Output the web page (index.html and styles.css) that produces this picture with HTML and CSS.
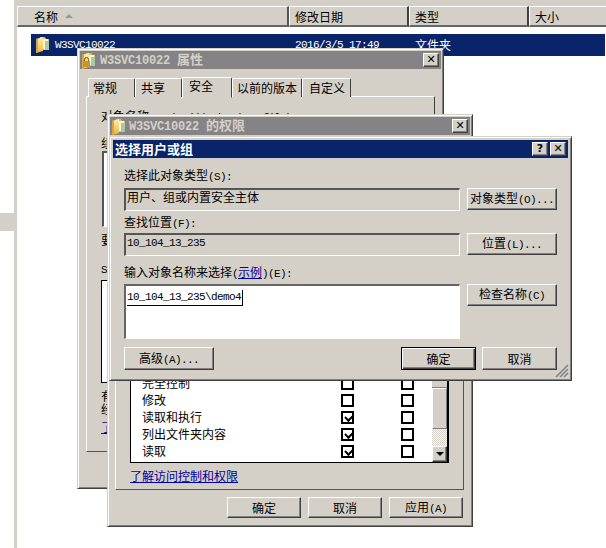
FILE: index.html
```html
<!DOCTYPE html>
<html lang="zh">
<head>
<meta charset="utf-8">
<title>选择用户或组</title>
<link rel="stylesheet" href="styles.css">
</head>
<body>
<svg class="defs" width="0" height="0" aria-hidden="true">
  <defs>
    <linearGradient id="fg" x1="0" y1="0" x2="0" y2="1">
      <stop offset="0" stop-color="#fdf0a8"/><stop offset="1" stop-color="#e8b648"/>
    </linearGradient>
    <symbol id="folder" viewBox="0 0 14 17">
      <path d="M4 1h5l1 2h3v11H4z" fill="#e7bf52"/>
      <path d="M6 3h6v10H6z" fill="#fff6d0"/>
      <path d="M9 5h4v9H9z" fill="#a9c9a6"/>
      <path d="M0 3l7-2v14l-7 2z" fill="url(#fg)"/>
      <path d="M0 3l2-.6v14L0 17z" fill="#d9a63c"/>
    </symbol>
  </defs>
</svg>
<div class="desktop">
  <div class="side"><div class="side-block"></div></div>
  <div class="gutter"></div>
  <main class="explorer">
    <div class="top-strip"></div>
    <div class="headers">
      <div class="hcell name">名称<span class="sort"></span></div>
      <div class="hcell date">修改日期</div>
      <div class="hcell type">类型</div>
      <div class="hcell size">大小</div>
    </div>
    <div class="row">
      <svg class="row-icon" width="14" height="17"><use href="#folder"/></svg>
      <span class="row-name l">W3SVC10022</span>
      <span class="row-date l">2016/3/5 17:49</span>
      <span class="row-type">文件夹</span>
    </div>
  </main>

  <section class="win win-props">
    <header class="title">
      <svg class="title-icon" width="14" height="17"><use href="#folder"/><path d="M1 9h7v6H1z" fill="#c8962c"/><path d="M2.5 9V7.5a2 2 0 0 1 4 0V9" fill="none" stroke="#6b5a2a"/></svg>
      <span class="title-text"><span class="lb">W3SVC10022</span>属性</span>
      <span class="cap-btn">✕</span>
    </header>
    <div class="tabs">
      <span class="tab t1">常规</span><span class="tab t2">共享</span><span class="tab active t3">安全</span><span class="tab t4">以前的版本</span><span class="tab t5">自定义</span>
    </div>
    <div class="props-panel">
      <div class="p-objname">对象名称:&nbsp;&nbsp;&nbsp;<span class="l">D:\web\htdocs\wwwfile\W3SVC10022</span></div>
      <div class="p-group">组或用户名(G):</div>
      <div class="p-list1"></div>
      <div class="p-change">要更改权限,请单击"编辑"。</div>
      <div class="p-perm l">SYSTEM 的权限(P)</div>
      <div class="p-list2"></div>
      <div class="p-note">有关特殊权限或高级设置,请单击<br>经"高级"。</div>
      <a class="link p-link" href="#">了解访问控制和权限</a>
    </div>
  </section>

  <section class="win win-perm">
    <header class="title">
      <svg class="title-icon" width="14" height="17"><use href="#folder"/></svg>
      <span class="title-text"><span class="lb">W3SVC10022</span>的权限</span>
      <span class="cap-btn">✕</span>
    </header>
    <div class="perm-panel">
      <div class="perm-list">
        <div class="perm-rows">
          <div class="perm-row"><span>完全控制</span><i class="cb"></i><i class="cb"></i></div>
          <div class="perm-row"><span>修改</span><i class="cb"></i><i class="cb"></i></div>
          <div class="perm-row"><span>读取和执行</span><i class="cb on"></i><i class="cb"></i></div>
          <div class="perm-row"><span>列出文件夹内容</span><i class="cb on"></i><i class="cb"></i></div>
          <div class="perm-row"><span>读取</span><i class="cb on"></i><i class="cb"></i></div>
        </div>
        <div class="scroll">
          <div class="up"></div>
          <div class="thumb"></div>
          <div class="track"></div>
          <div class="arrow"><span></span></div>
        </div>
      </div>
      <a class="link perm-link" href="#">了解访问控制和权限</a>
    </div>
    <footer class="perm-foot">
      <button class="btn b74">确定</button>
      <button class="btn b74">取消</button>
      <button class="btn b74">应用<span class="l">(A)</span></button>
    </footer>
  </section>

  <section class="win win-select">
    <header class="title active-title">
      <span class="title-text big">选择用户或组</span>
      <span class="cap-btn help">?</span>
      <span class="cap-btn">✕</span>
    </header>
    <div class="sel-body">
      <label class="lbl lbl1">选择此对象类型<span class="l">(S):</span></label>
      <div class="sel-line">
        <div class="field cjk">用户、组或内置安全主体</div>
        <button class="btn b90">对象类型<span class="l">(O)...</span></button>
      </div>
      <label class="lbl lbl2">查找位置<span class="l">(F):</span></label>
      <div class="sel-line">
        <div class="field l">10_104_13_235</div>
        <button class="btn b90">位置<span class="l">(L)...</span></button>
      </div>
      <label class="lbl lbl3">输入对象名称来选择<span class="l">(</span><a class="link" href="#">示例</a><span class="l">)(E):</span></label>
      <div class="sel-line">
        <div class="field input"><span class="typed l">10_104_13_235\demo4</span></div>
        <button class="btn b90">检查名称<span class="l">(C)</span></button>
      </div>
      <div class="sel-actions">
        <button class="btn b90">高级<span class="l">(A)...</span></button>
        <span class="push"></span>
        <button class="btn b75 def">确定</button>
        <button class="btn b75">取消</button>
      </div>
    </div>
    <svg class="grip" width="14" height="14" viewBox="0 0 14 14" aria-hidden="true">
      <path d="M13 1L1 13M13 5L5 13M13 9L9 13" stroke="#808080" stroke-width="1.5" fill="none"/>
    </svg>
  </section>
</div>
</body>
</html>
```
FILE: styles.css
```css
* { box-sizing: border-box; }
html, body { margin: 0; padding: 0; }
body {
  width: 606px; height: 548px; overflow: hidden; background: #fff; color: #000;
  font: 12px/14px "Noto Sans CJK SC", "Liberation Sans", sans-serif;
}
.defs { position: absolute; }
.l { font-family: "Liberation Mono", "Noto Sans CJK SC", monospace; font-size: 11px; letter-spacing: -0.6px; }
.lb { font-family: "Liberation Mono", monospace; font-size: 12px; font-weight: 700; letter-spacing: -0.2px; margin-right: 7px; }

.desktop { position: relative; width: 606px; height: 548px; display: grid; grid-template-columns: 14px 3px 1fr; overflow: hidden; }
.side { padding-top: 213px; }
.side-block { height: 18px; background: #d4d0c8; }
.gutter { background: #d4d0c8; }

.top-strip { height: 6px; background: #d4d0c8; }
.headers { display: grid; grid-template-columns: 272px 120px 120px 1fr; height: 21px; }
.hcell {
  background: #d4d0c8; border-top: 1px solid #fff; border-left: 1px solid #fff;
  border-right: 2px solid #404040; border-bottom: 2px solid #666;
  padding: 0 0 0 5px; line-height: 17px; display: flex; align-items: center;
}
.hcell.name { padding-left: 16px; border-right-color: #555; }
.hcell.date { padding-left: 5px; }
.hcell.size { border-right: 0; }
.sort { width: 0; height: 0; margin-left: 7px; border: 4px solid transparent; border-top: 0; border-bottom: 4px solid #9a9a96; }
.row {
  margin: 7px 1px 0 14px; height: 22px; background: #0a246a; color: #fff;
  display: flex; align-items: center; padding-bottom: 1px;
}
.row-icon { margin-left: 5px; flex: none; }
.row-name { margin-left: 5px; width: 240px; }
.row-date { width: 120px; }

.win {
  position: absolute; display: flex; flex-direction: column; background: #d4d0c8;
  border: 1px solid; border-color: #d4d0c8 #404040 #404040 #d4d0c8;
  box-shadow: inset 1px 1px 0 #fff, inset -1px -1px 0 #808080;
  padding: 2px;
}
.win-props { left: 77px; top: 48px; width: 367px; height: 441px; }
.win-perm { left: 107px; top: 114px; width: 366px; height: 413px; }
.win-select { left: 109px; top: 136px; width: 463px; height: 245px; padding: 3px; }

.title { flex: none; height: 18px; background: #858385; color: #d4d0c8; display: flex; align-items: center; padding: 0 2px; font-weight: 700; font-size: 13px; }
.active-title { background: #0a246a; color: #fff; }
.title-icon { flex: none; margin-right: 3px; }
.win-props .title-icon { margin-right: 4px; }
.title-text { flex: 1; white-space: nowrap; }
.title-text.big { padding-left: 0; }
.cap-btn {
  flex: none; width: 16px; height: 14px; background: #d4d0c8; color: #000;
  border: 1px solid; border-color: #fff #404040 #404040 #fff; box-shadow: inset -1px -1px 0 #808080;
  font: 700 11px/12px "DejaVu Sans", sans-serif; text-align: center;
}
.cap-btn.help { margin-right: 2px; font-size: 11px; }

.tabs { display: flex; align-items: flex-end; height: 28px; padding-left: 8px; margin-bottom: -1px; position: relative; z-index: 1; }
.tab {
  height: 19px; border: 1px solid; border-color: #fff #404040 transparent #fff; border-bottom: 0;
  border-radius: 2px 2px 0 0; background: #d4d0c8; padding: 2px 0 0 5px;
}
.t1 { width: 47px; padding-left: 4px; } .t2 { width: 47px; } .t4 { width: 70px; padding-left: 4px; } .t5 { width: 49px; padding-left: 6px; }
.t3 { width: 50px; height: 21px; padding-top: 1px; padding-left: 6px; border-bottom: 1px solid #d4d0c8; margin-bottom: -1px; position: relative; z-index: 2; }
.props-panel {
  width: 349px; height: 356px; margin-left: 6px; padding: 12px 14px 0;
  border: 1px solid; border-color: #fff #404040 #555 #fff; white-space: nowrap; overflow: hidden;
}
.p-objname { height: 14px; }
.p-group { margin-top: 13px; height: 14px; }
.p-list1 { width: 300px; height: 76px; margin: 1px 0 0 1px; background: #fff; border: 1px solid; border-color: #808080 #fff #fff #808080; border-left: 2px solid #555; border-top: 2px solid #555; }
.p-change { margin-top: 6px; height: 14px; }
.p-perm { margin-top: 16px; height: 14px; }
.p-list2 { width: 300px; height: 103px; margin-top: 3px; background: #fff; border: 1px solid #000; }
.p-note { margin-top: 6px; line-height: 13px; }
.p-link { display: block; margin-top: 5px; }

.link { color: #00009c; text-decoration: underline; }

.perm-panel {
  flex: none; width: 349px; height: 334px; margin: 21px 0 0 5px; padding: 0 14px 6px;
  border: 1px solid; border-color: #fff #555 #555 #fff;
  display: flex; flex-direction: column; justify-content: flex-end;
}
.perm-list { height: 95px; width: 319px; flex: none; display: flex; background: #fff; border: 1px solid #000; border-right-width: 2px; overflow: hidden; }
.perm-rows { flex: 1; min-width: 0; padding: 0 0 2px 11px; display: flex; flex-direction: column; justify-content: flex-end; }
.perm-row { height: 17px; flex: none; display: flex; align-items: center; line-height: 15px; }
.perm-row span { width: 199px; flex: none; padding-bottom: 2px; }
.cb { display: block; width: 13px; height: 13px; margin-right: 47px; border: 2px solid #000; background: #fff; flex: none; position: relative; }
.cb:last-child { margin-right: 0; }
.cb.on::after {
  content: ""; position: absolute; left: 1.5px; top: 0.5px; width: 6px; height: 3.5px;
  border-left: 2px solid #000; border-bottom: 2px solid #000; transform: rotate(-45deg);
}
.scroll { flex: none; width: 15px; display: flex; flex-direction: column; justify-content: flex-end; }
.up { height: 16px; flex: none; background: #d4d0c8; border-bottom: 1px solid #808080; }
.thumb { height: 41px; flex: none; background: #d4d0c8; border: 1px solid; border-color: #fff #808080 #808080 #fff; }
.track { height: 17px; flex: none; background: repeating-conic-gradient(#d4d0c8 0 25%, #fff 0 50%) 0 0 / 2px 2px; }
.arrow { height: 16px; flex: none; background: #d4d0c8; border: 1px solid; border-color: #fff #404040 #404040 #fff; box-shadow: inset -1px -1px 0 #808080; display: flex; align-items: center; justify-content: center; }
.arrow span { width: 0; height: 0; border: 4px solid transparent; border-bottom: 0; border-top: 4px solid #000; }
.perm-link { margin-top: 6px; line-height: 14px; width: max-content; }
.perm-foot { display: flex; justify-content: flex-end; gap: 7px; padding: 7px 7px 0 0; }

.btn {
  height: 21px; padding: 0; background: #d4d0c8; color: #000; font: inherit; line-height: 17px;
  border: 1px solid; border-color: #fff #404040 #404040 #fff; box-shadow: inset -1px -1px 0 #808080;
  flex: none; white-space: nowrap;
}
.b74 { width: 74px; }
.b75 { width: 75px; }
.b90 { width: 90px; }
.def { border-color: #000; box-shadow: inset 1px 1px 0 #fff, inset -1px -1px 0 #404040, inset -2px -2px 0 #808080; }

.sel-body { flex: 1; padding: 10px 11px 0 11px; display: flex; flex-direction: column; }
.lbl { display: block; height: 14px; }
.lbl1 { margin: 0 0 6px; }
.lbl2 { margin: 4px 0 4px; }
.lbl3 { margin: 9px 0 5px; }
.sel-line { display: flex; align-items: flex-start; gap: 7px; }
.field {
  width: 336px; height: 23px; padding: 0 2px 0 1px; line-height: 17px;
  border: 1px solid; border-color: #555 #fff #fff #555; border-left-width: 2px; border-top-width: 2px;
}
.field.cjk { line-height: 14px; }
.sel-line .btn { height: 22px; }
.input { height: 55px; background: #fff; border-top-color: #666; border-left-color: #666; margin-bottom: 8px; }
.typed { display: inline-block; line-height: 15px; border-bottom: 1px solid #000; border-right: 1px solid #000; padding-right: 1px; margin-top: 1px; }
.sel-actions { display: flex; gap: 6px; width: 433px; }
.sel-actions .btn { height: 23px; }
.push { flex: 1; }
.grip { position: absolute; right: 2px; bottom: 2px; }
```
